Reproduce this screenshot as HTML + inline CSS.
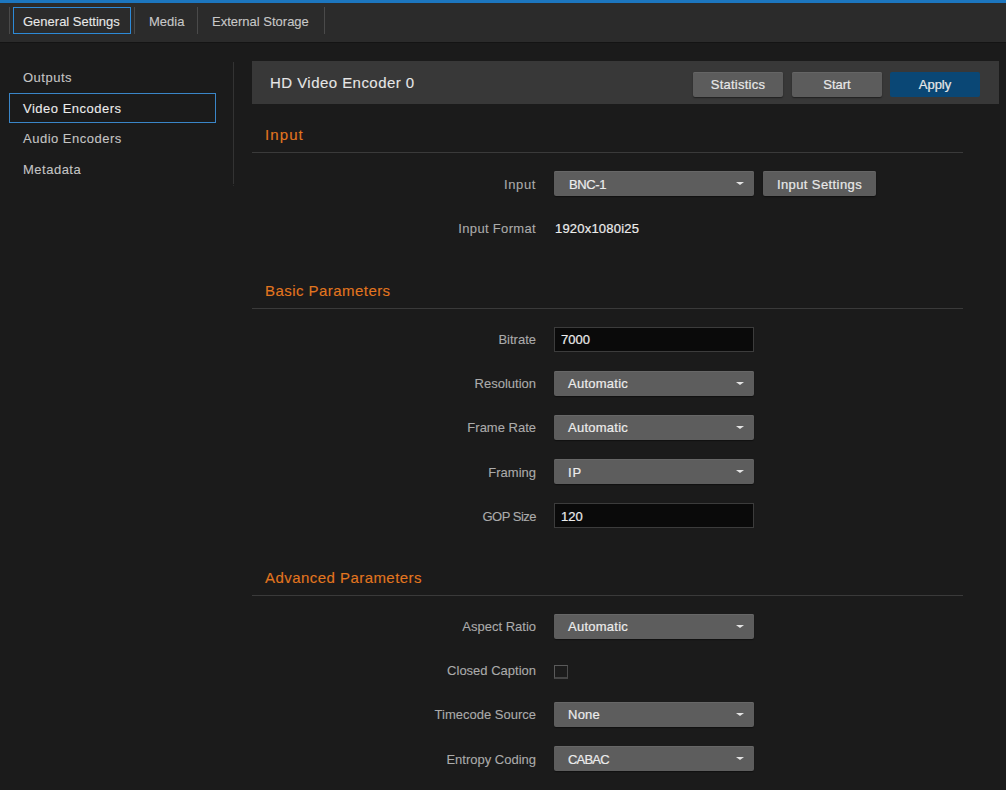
<!DOCTYPE html>
<html><head><meta charset="utf-8">
<style>
*{box-sizing:border-box;margin:0;padding:0}
html,body{-webkit-text-stroke:0.1px;width:1006px;height:790px;overflow:hidden;background:#1b1b1b;font-family:"Liberation Sans",sans-serif;font-size:13px;color:#e6e6e6}
.a{position:absolute;white-space:nowrap}
.t13{font-size:13px;line-height:13px}
.t14{font-size:14px;line-height:14px}
.t15{font-size:15px;line-height:15px;letter-spacing:0.45px}
#strip{left:0;top:0;width:1006px;height:3px;background:#1c76bf}
#nav{left:0;top:3px;width:1006px;height:39px;background:#2b2b2b}
.sep{width:1px;height:27px;top:7px;background:#4a4a4a}
#tabact{left:13px;top:7px;width:118px;height:27px;border:1px solid #2d8ad8}
.navt{color:#c8c8c8}
.side{color:#c4c4c4;font-size:13px;line-height:13px;letter-spacing:0.5px}
#sideact{left:9px;top:93px;width:207px;height:30px;border:1px solid #3a86c8}
#vdiv{left:233px;top:62px;width:1px;height:122px;background:#333}
#hdr{left:252px;top:61px;width:747px;height:43px;background:#383838}
.btn{-webkit-text-stroke:0.2px;height:25px;width:90px;top:72px;background:#5c5c5c;border-radius:2px;box-shadow:inset 0 1px 0 #656565,0 1px 1.5px rgba(0,0,0,0.45);color:#e8e8e8;text-align:center;font-size:13px;line-height:25px}
.h{color:#e2761f}
.line{left:252px;width:711px;height:1px;background:#3a3a3a}
.lbl{color:#ababab;text-align:right;width:200px;left:336px}
.sel{left:554px;width:200px;height:25px;background:#5d5d5d;border-radius:2px;box-shadow:inset 0 1px 0 #676767,0 1px 1px rgba(0,0,0,0.4)}
.sel span{-webkit-text-stroke:0.2px;position:absolute;left:14px;top:0;letter-spacing:0.25px;line-height:25px;font-size:13px;color:#ececec}
.sel .d1{top:1px}
.sel i{position:absolute;left:182px;top:11px;width:0;height:0;border-left:4px solid transparent;border-right:4px solid transparent;border-top:3px solid #e4e4e4}
.inp{left:554px;width:200px;height:25px;background:#0a0a0a;border:1px solid #3c3c3c}
.inp span{-webkit-text-stroke:0.2px;position:absolute;left:6px;top:-1px;line-height:25px;font-size:13px;color:#ececec}
</style></head><body>
<div class="a" id="strip"></div>
<div class="a" id="nav"></div>
<div class="a" style="left:0;top:42px;width:1006px;height:1px;background:#141414"></div>
<div class="a sep" style="left:9px"></div>
<div class="a" id="tabact"></div>
<div class="a sep" style="left:134px"></div>
<div class="a sep" style="left:197px"></div>
<div class="a sep" style="left:324px"></div>
<div class="a t13 navt" style="left:23px;top:15px;color:#e8e8e8">General Settings</div>
<div class="a t13 navt" style="left:149px;top:15px">Media</div>
<div class="a t13 navt" style="left:212px;top:15px">External Storage</div>

<div class="a" id="sideact"></div>
<div class="a" id="vdiv"></div>
<div class="a" style="left:233px;top:185px;width:1px;height:1px;background:#2c2c2c"></div>
<div class="a side" style="left:23px;top:71px">Outputs</div>
<div class="a side" style="left:23px;top:102px;color:#ececec">Video Encoders</div>
<div class="a side" style="left:23px;top:132px">Audio Encoders</div>
<div class="a side" style="left:23px;top:163px">Metadata</div>

<div class="a" id="hdr"></div>
<div class="a t15" style="left:270px;top:75px;color:#e6e6e6">HD Video Encoder 0</div>
<div class="a btn" style="left:693px"><span style="letter-spacing:0.25px">Statistics</span></div>
<div class="a btn" style="left:792px">Start</div>
<div class="a btn" style="left:890px;background:#0a4775;box-shadow:none">Apply</div>

<div class="a t15 h" style="left:265px;top:127px;letter-spacing:1.1px">Input</div>
<div class="a line" style="top:152px"></div>
<div class="a t13 lbl" style="top:178px;letter-spacing:0.6px">Input</div>
<div class="a sel" style="top:171px"><span class="d1" style="letter-spacing:-0.4px;left:15px">BNC-1</span><i></i></div>
<div class="a btn" style="left:763px;top:171px;width:113px;padding-top:1px"><span style="letter-spacing:0.4px">Input Settings</span></div>
<div class="a t13 lbl" style="top:222px;letter-spacing:0.33px">Input Format</div>
<div class="a t13" style="left:555px;top:222px;color:#ececec;letter-spacing:0.2px;-webkit-text-stroke:0.2px">1920x1080i25</div>

<div class="a t15 h" style="left:265px;top:283px">Basic Parameters</div>
<div class="a line" style="top:308px"></div>
<div class="a t13 lbl" style="top:333px">Bitrate</div>
<div class="a inp" style="top:327px"><span>7000</span></div>
<div class="a t13 lbl" style="top:377px">Resolution</div>
<div class="a sel" style="top:371px"><span>Automatic</span><i></i></div>
<div class="a t13 lbl" style="top:421px">Frame Rate</div>
<div class="a sel" style="top:415px"><span>Automatic</span><i></i></div>
<div class="a t13 lbl" style="top:466px">Framing</div>
<div class="a sel" style="top:459px"><span class="d1" style="letter-spacing:1px">IP</span><i></i></div>
<div class="a t13 lbl" style="top:510px;letter-spacing:-0.5px">GOP Size</div>
<div class="a inp" style="top:503px"><span style="top:0">120</span></div>

<div class="a t15 h" style="left:265px;top:570px">Advanced Parameters</div>
<div class="a line" style="top:595px"></div>
<div class="a t13 lbl" style="top:620px">Aspect Ratio</div>
<div class="a sel" style="top:614px"><span>Automatic</span><i></i></div>
<div class="a t13 lbl" style="top:664px">Closed Caption</div>
<div class="a" style="left:554px;top:665px;width:14px;height:14px;border:1px solid #5a5a5a;border-right-color:#4c4c4c;border-bottom:2px solid #454545;background:#1c1c1c"></div>
<div class="a t13 lbl" style="top:708px">Timecode Source</div>
<div class="a sel" style="top:702px"><span>None</span><i></i></div>
<div class="a t13 lbl" style="top:753px">Entropy Coding</div>
<div class="a sel" style="top:746px"><span class="d1" style="letter-spacing:-0.8px">CABAC</span><i></i></div>
</body></html>
